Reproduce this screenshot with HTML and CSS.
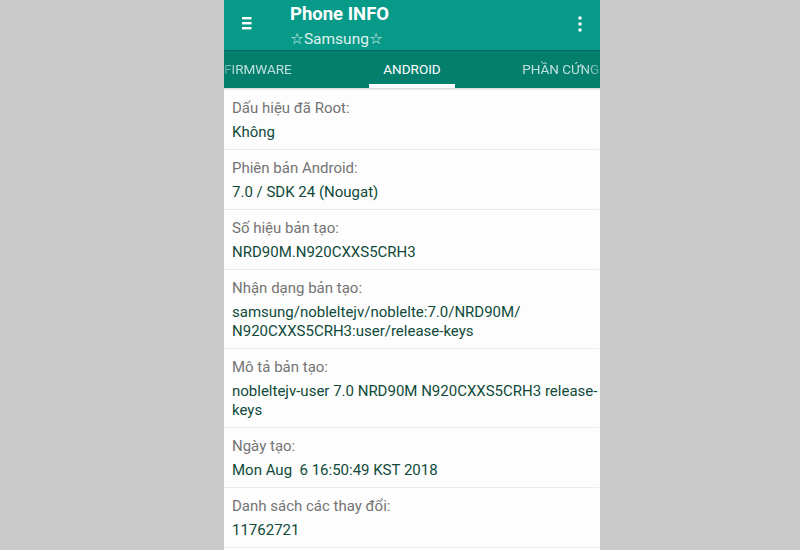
FILE: index.html
```html
<!DOCTYPE html>
<html lang="vi">
<head>
<meta charset="utf-8">
<title>Phone INFO</title>
<link rel="stylesheet" href="styles.css">
</head>
<body>
<div class="screen">
  <header class="appbar">
    <div class="toolbar">
      <div class="menu-btn">
        <svg width="10" height="13" viewBox="0 0 10 13"><rect x="0" y="0" width="9.5" height="2.4" fill="#fff"/><rect x="0" y="5" width="9.5" height="2.4" fill="#fff"/><rect x="0" y="10" width="9.5" height="2.4" fill="#fff"/></svg>
      </div>
      <div class="titles">
        <div class="title">Phone INFO</div>
        <div class="subtitle">☆Samsung☆</div>
      </div>
      <div class="more-btn">
        <svg width="6" height="16" viewBox="0 0 6 16"><circle cx="3" cy="2" r="1.8" fill="#fff"/><circle cx="3" cy="8" r="1.8" fill="#fff"/><circle cx="3" cy="14" r="1.8" fill="#fff"/></svg>
      </div>
    </div>
    <nav class="tabs">
      <div class="tab tab-left"><span class="tab-text">FIRMWARE</span></div>
      <div class="tab tab-active">ANDROID</div>
      <div class="tab tab-right"><span class="tab-text">PHẦN CỨNG</span></div>
    </nav>
  </header>
  <main class="list">
    <div class="row">
      <div class="label">Dấu hiệu đã Root:</div>
      <div class="value">Không</div>
    </div>
    <div class="row">
      <div class="label">Phiên bản Android:</div>
      <div class="value">7.0 / SDK 24 (Nougat)</div>
    </div>
    <div class="row">
      <div class="label">Số hiệu bản tạo:</div>
      <div class="value">NRD90M.N920CXXS5CRH3</div>
    </div>
    <div class="row">
      <div class="label">Nhận dạng bản tạo:</div>
      <div class="value">samsung/nobleltejv/noblelte:7.0/NRD90M/<br>N920CXXS5CRH3:user/release-keys</div>
    </div>
    <div class="row">
      <div class="label">Mô tả bản tạo:</div>
      <div class="value nowrap">nobleltejv-user 7.0 NRD90M N920CXXS5CRH3 release-<br>keys</div>
    </div>
    <div class="row">
      <div class="label">Ngày tạo:</div>
      <div class="value pre">Mon Aug  6 16:50:49 KST 2018</div>
    </div>
    <div class="row">
      <div class="label">Danh sách các thay đổi:</div>
      <div class="value">11762721</div>
    </div>
  </main>
</div>
</body>
</html>
```

FILE: styles.css
```css
html, body {
  margin: 0;
  padding: 0;
  height: 100%;
  background: #c9c9c9;
  overflow: hidden;
}

body {
  font-family: Roboto, "Noto Sans", "DejaVu Sans", sans-serif;
}

.screen {
  margin-left: 224px;
  width: 376px;
  height: 550px;
  background: #fdfdfd;
  overflow: hidden;
  display: flex;
  flex-direction: column;
}

.appbar {
  position: relative;
  z-index: 2;
}

.toolbar {
  height: 50px;
  background: #089a89;
  display: flex;
  align-items: center;
  color: #fff;
}

.menu-btn {
  width: 66px;
  padding-left: 18px;
  padding-bottom: 4px;
  box-sizing: border-box;
  display: flex;
  align-items: center;
  height: 100%;
}

.titles {
  flex: 1;
  display: flex;
  flex-direction: column;
  align-self: flex-start;
  padding-top: 2px;
}

.title {
  font-size: 18.5px;
  font-weight: bold;
  line-height: 24px;
}

.subtitle {
  font-size: 15.5px;
  line-height: 20px;
  margin-top: 3px;
  color: rgba(255, 255, 255, 0.88);
  font-family: Roboto, "DejaVu Sans", sans-serif;
}

.more-btn {
  width: 40px;
  height: 100%;
  display: flex;
  align-items: center;
  justify-content: center;
  padding-bottom: 3px;
  box-sizing: border-box;
}

.tabs {
  height: 38px;
  background: #047f6e;
  display: grid;
  grid-template-columns: 1fr auto 1fr;
  box-shadow: inset 0 1px 1px rgba(0, 0, 0, 0.15), 0 1px 2px rgba(0, 0, 0, 0.2);
}

.tab {
  font-size: 13.5px;
  line-height: 38px;
  white-space: nowrap;
  overflow: hidden;
  color: rgba(255, 255, 255, 0.75);
  box-sizing: border-box;
}

.tab-left {
  text-align: right;
  padding-right: 77px;
  direction: rtl;
  -webkit-mask-image: linear-gradient(to right, rgba(0,0,0,0.35) 0, #000 12px);
  mask-image: linear-gradient(to right, rgba(0,0,0,0.35) 0, #000 12px);
}

.tab-text {
  direction: ltr;
  unicode-bidi: isolate;
}

.tab-active {
  color: #fff;
  padding: 0 14.5px;
  position: relative;
}

.tab-active::after {
  content: "";
  position: absolute;
  left: 0;
  right: 0;
  bottom: 0;
  height: 4px;
  background: #fff;
}

.tab-right {
  padding-left: 67px;
  -webkit-mask-image: linear-gradient(to left, rgba(0,0,0,0.35) 0, #000 14px);
  mask-image: linear-gradient(to left, rgba(0,0,0,0.35) 0, #000 14px);
}

.list {
  flex: 1;
  padding-top: 2px;
}

.row {
  padding: 8px 0 7px 8px;
  border-bottom: 1px solid #ececec;
  margin-right: 1px;
}

.label {
  font-size: 15px;
  line-height: 20px;
  color: #747474;
  margin-bottom: 5px;
}

.value {
  font-size: 15px;
  line-height: 19px;
  color: #0f4a3a;
}

.nowrap {
  white-space: nowrap;
}

.pre {
  white-space: pre;
}
```
